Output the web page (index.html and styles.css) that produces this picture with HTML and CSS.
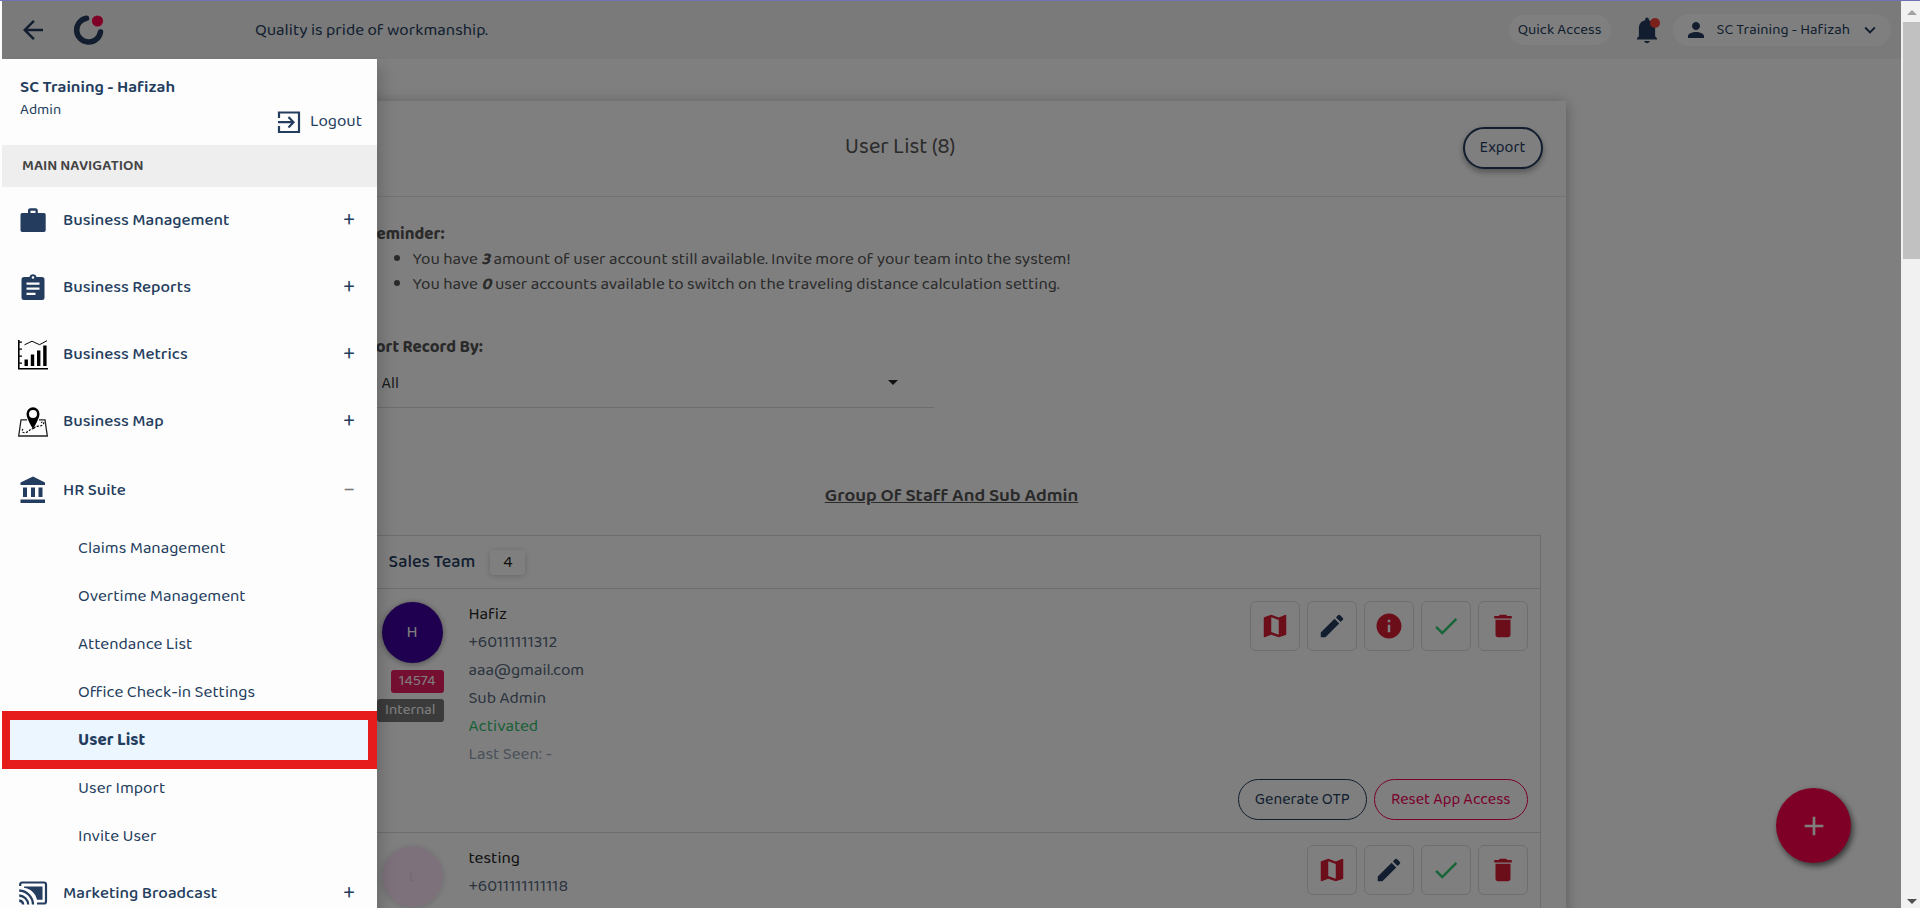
FILE: index.html
```html
<!DOCTYPE html>
<html lang="en">
<head>
<meta charset="utf-8">
<title>User List</title>
<link rel="stylesheet" href="styles.css">
</head>
<body>
<svg class="sprite" aria-hidden="true">
  <symbol id="i-map" viewBox="0 0 24 24"><path d="M20.5 3l-.16.03L15 5.1 9 3 3.36 4.9c-.21.07-.36.25-.36.48V20.500c0 .28.22.5.5.5l.16-.03L9 18.900l6 2.100 5.640-1.900c.21-.07.36-.25.36-.48V3.500c0-.28-.22-.5-.5-.5zM15 19l-6-2.110V5l6 2.110V19z"/></symbol>
  <symbol id="i-edit" viewBox="0 0 24 24"><path d="M3 17.250V21h3.750L17.810 9.940l-3.750-3.750L3 17.250zM20.710 7.040a1 1 0 0 0 0-1.410l-2.340-2.340a1 1 0 0 0-1.410 0l-1.830 1.830 3.750 3.750 1.830-1.830z"/></symbol>
  <symbol id="i-info" viewBox="0 0 24 24"><path d="M12 2C6.480 2 2 6.480 2 12s4.480 10 10 10 10-4.480 10-10S17.520 2 12 2zm1 15h-2v-6h2v6zm0-8h-2V7h2v2z"/></symbol>
  <symbol id="i-check" viewBox="0 0 24 24"><path d="M9 16.200L4.800 12l-1.400 1.400L9 19 21 7l-1.400-1.400L9 16.200z"/></symbol>
  <symbol id="i-trash" viewBox="0 0 24 24"><path d="M6 19c0 1.100.9 2 2 2h8c1.100 0 2-.9 2-2V7H6v12zM19 4h-3.500l-1-1h-5l-1 1H5v2h14V4z"/></symbol>
</svg>

<div class="app">
  <div class="view">
    <header class="topbar">
      <button class="icon-btn" aria-label="Back">
        <svg width="30" height="30" viewBox="0 0 24 24" fill="#243d5e"><path d="M20 11H7.830l5.590-5.590L12 4l-8 8 8 8 1.410-1.410L7.830 13H20v-2z"/></svg>
      </button>
      <svg class="logo" width="32" height="32" viewBox="0 0 32 32"><path d="M13.500 4.200A12 12 0 1 0 27.500 18" fill="none" stroke="#243d5e" stroke-width="5.500" stroke-linecap="round"/><circle cx="24.500" cy="7" r="5.600" fill="#ff004c"/></svg>
      <p class="quote">Quality is pride of workmanship.</p>
      <button class="pill quick">Quick Access</button>
      <button class="icon-btn bell" aria-label="Notifications">
        <svg width="30" height="30" viewBox="0 0 24 24" fill="#243d5e"><path d="M12 22.500a2.500 2.500 0 0 0 2.400-1.700H9.600A2.500 2.500 0 0 0 12 22.500zm6.500-5.500V10.500c0-3.200-1.700-5.700-5-6.400V3.500a1.500 1.500 0 0 0-3 0v.6c-3.300.7-5 3.200-5 6.400V17L4 18.500v1h16v-1z"/></svg>
        <span class="dot"></span>
      </button>
      <button class="pill account">
        <svg width="24" height="24" viewBox="0 0 24 24" fill="#243d5e"><path d="M12 12c2.210 0 4-1.790 4-4s-1.790-4-4-4-4 1.790-4 4 1.790 4 4 4zm0 2c-2.670 0-8 1.340-8 4v2h16v-2c0-2.660-5.330-4-8-4z"/></svg>
        <span>SC Training - Hafizah</span>
        <svg width="22" height="22" viewBox="0 0 24 24" fill="#243d5e"><path d="M7.410 8.590L12 13.170l4.590-4.580L18 10l-6 6-6-6z"/></svg>
      </button>
    </header>

    <main class="card">
      <div class="card-head">
        <h1>User List (8)</h1>
        <button class="export">Export</button>
      </div>
      <div class="card-body">
        <section class="reminder">
          <strong>Reminder:</strong>
          <ul>
            <li>You have <b><i>3</i></b> amount of user account still available. Invite more of your team into the system!</li>
            <li>You have <b><i>0</i></b> user accounts available to switch on the traveling distance calculation setting.</li>
          </ul>
        </section>
        <div class="sort">
          <label for="sort">Sort Record By:</label>
          <div class="select-wrap">
            <select id="sort"><option>All</option></select>
          </div>
        </div>
        <h2>Group Of Staff And Sub Admin</h2>
        <section class="group">
          <div class="group-head"><h3>Sales Team</h3><span class="count">4</span></div>
          <article class="user">
            <div class="who">
              <span class="avatar">H</span>
              <span class="tag pink">14574</span>
              <span class="tag grey">Internal</span>
            </div>
            <div class="info">
              <span class="name">Hafiz</span>
              <span>+60111111312</span>
              <span>aaa@gmail.com</span>
              <span>Sub Admin</span>
              <span class="ok">Activated</span>
              <span class="seen">Last Seen: -</span>
            </div>
            <div class="actions">
              <div class="tools">
                <button class="red" aria-label="Map"><svg><use href="#i-map"/></svg></button>
                <button class="navy" aria-label="Edit"><svg><use href="#i-edit"/></svg></button>
                <button class="red" aria-label="Info"><svg><use href="#i-info"/></svg></button>
                <button class="green" aria-label="Approve"><svg><use href="#i-check"/></svg></button>
                <button class="red" aria-label="Delete"><svg><use href="#i-trash"/></svg></button>
              </div>
              <div class="links">
                <button class="navy">Generate OTP</button>
                <button class="rose">Reset App Access</button>
              </div>
            </div>
          </article>
          <article class="user">
            <div class="who"><span class="avatar pale">t</span></div>
            <div class="info">
              <span class="name">testing</span>
              <span>+6011111111118</span>
              <span>staff@gmail.com</span>
            </div>
            <div class="actions">
              <div class="tools">
                <button class="red" aria-label="Map"><svg><use href="#i-map"/></svg></button>
                <button class="navy" aria-label="Edit"><svg><use href="#i-edit"/></svg></button>
                <button class="green" aria-label="Approve"><svg><use href="#i-check"/></svg></button>
                <button class="red" aria-label="Delete"><svg><use href="#i-trash"/></svg></button>
              </div>
            </div>
          </article>
        </section>
      </div>
    </main>

    <button class="fab" aria-label="Add user"><svg width="32" height="32" viewBox="0 0 24 24" fill="#fff"><path d="M19 13h-6v6h-2v-6H5v-2h6V5h2v6h6v2z"/></svg></button>
    <div class="shade"></div>

    <aside class="sidebar">
      <div class="profile">
        <div class="person"><strong>SC Training - Hafizah</strong><span>Admin</span></div>
        <a class="logout" href="#">
          <svg width="24" height="24" viewBox="0 0 24 24" fill="none" stroke="#243d5e" stroke-width="2.200"><path d="M2 8V2.500h20v19.500H2V16M1 12.200h15M11.500 7l5 5.200-5 5.200"/></svg>
          <span>Logout</span>
        </a>
      </div>
      <h4>MAIN NAVIGATION</h4>
      <nav>
        <a class="item" href="#">
          <svg viewBox="0 0 30 30"><path fill-rule="evenodd" d="M2.500 8.700A1.700 1.700 0 0 1 4.200 7H10V4.500a2.300 2.300 0 0 1 2.300-2.300h5.200a2.300 2.300 0 0 1 2.300 2.300V7H26a1.700 1.700 0 0 1 1.700 1.700v15.500a1.700 1.700 0 0 1-1.700 1.700H4.200a1.700 1.700 0 0 1-1.700-1.700zM12.500 4.700V7h5V4.700z"/></svg>
          <span>Business Management</span><b>+</b>
        </a>
        <a class="item" href="#">
          <svg viewBox="0 0 30 30"><path fill-rule="evenodd" d="M6 4h5.500a3.600 3.600 0 0 1 7 0H24a2.500 2.500 0 0 1 2.500 2.500v18A2.500 2.500 0 0 1 24 27H6a2.500 2.500 0 0 1-2.500-2.500v-18A2.500 2.500 0 0 1 6 4zm9-.8a1.200 1.200 0 1 0 0 2.600 1.200 1.200 0 0 0 0-2.600zM8.500 9.500v2.200h13V9.500zm0 5v2.200h13v-2.200zm0 5.200v2.200h9v-2.200z"/></svg>
          <span>Business Reports</span><b>+</b>
        </a>
        <a class="item" href="#">
          <svg viewBox="0 0 30 30"><g fill="#000"><path d="M0 0h1.600v28H30v1.500H0z"/><path d="M1 1.500h3v1.200H1zm0 7h3v1.200H1zm0 7h3v1.200H1zm0 7h3v1.200H1zM6.500 19.500h3.400V26H6.500zm6.300-5h3.400V26h-3.400zm6.200-4h3.400V26H19zM25.200 5.500h3.400V26h-3.400z"/></g><path d="M6.500 4.800L14 1.200l7.500 3.500 7.500-4" fill="none" stroke="#000" stroke-width="1"/></svg>
          <span>Business Metrics</span><b>+</b>
        </a>
        <a class="item" href="#">
          <svg viewBox="0 0 30 30"><path d="M9 12.800H3L.7 29h28.600L27 12.800h-6" fill="none" stroke="#222" stroke-width="1.300"/><path d="M16 21.500c-4 0-5 3-8 4s-5-1-3-3.500M16 21.500c2-4 6-1 8.500-3.500s1-4-1.500-2.500" fill="none" stroke="#000" stroke-width="1.100" stroke-dasharray="2.200 1.300"/><path fill="#000" fill-rule="evenodd" d="M15 .3a6.500 6.500 0 0 0-6.500 6.500C8.500 12 15 22 15 22s6.500-10 6.500-15.200A6.500 6.500 0 0 0 15 .3zm0 2.700a4 4 0 1 1 0 8 4 4 0 0 1 0-8z"/></svg>
          <span>Business Map</span><b>+</b>
        </a>
        <a class="item open" href="#">
          <svg viewBox="0 0 30 30"><path d="M15 1.500L27 7.500V10H2.500V7.500zM5 12.500h4V22H5zm8 0h4V22h-4zm7.500 0h4V22h-4zM2.500 24.500H27V28H2.500z"/></svg>
          <span>HR Suite</span><b class="minus">−</b>
        </a>
        <div class="sub">
          <a href="#">Claims Management</a>
          <a href="#">Overtime Management</a>
          <a href="#">Attendance List</a>
          <a href="#">Office Check-in Settings</a>
          <a class="active" href="#">User List</a>
          <a href="#">User Import</a>
          <a href="#">Invite User</a>
        </div>
        <a class="item last" href="#">
          <svg viewBox="0 0 30 30"><path d="M2.200 8V6.500a2 2 0 0 1 2-2H26a2 2 0 0 1 2 2v17a2 2 0 0 1-2 2H19" fill="none" stroke="#243d5e" stroke-width="2.200"/><path d="M6 8.500h18.500v13.200H19C17.500 15 12 10.500 6 9.800z"/><path d="M1.200 22.500a4.500 4.500 0 0 1 4 4M1.200 17.500a9.500 9.500 0 0 1 9 9M1.200 12.500a14.500 14.500 0 0 1 13.800 14" fill="none" stroke="#243d5e" stroke-width="2.300"/></svg>
          <span>Marketing Broadcast</span><b>+</b>
        </a>
      </nav>
    </aside>
  </div>
  <div class="scrollbar" aria-hidden="true">
    <span class="up"></span><span class="thumb"></span><span class="down"></span>
  </div>
</div>
</body>
</html>
```
FILE: styles.css
```css
* { box-sizing: border-box; margin: 0; padding: 0; }
body {
  font: 17px/25px "Baloo 2", "Noto Sans", "Open Sans", sans-serif;
  color: #555;
  background: #fdfdfd;
  overflow: hidden;
}
button, select { font: inherit; background: none; border: 0; color: #243d5e; }
a { color: inherit; text-decoration: none; }
.sprite { position: absolute; width: 0; height: 0; }

.app { display: flex; height: 100vh; border-top: 1px solid #6f72b4; }
.view { position: relative; flex: 1; margin-left: 2px; overflow: hidden; background: #fff; }

.topbar { display: flex; align-items: center; height: 58px; padding: 0 10px 0 16px; background: #f4f4f4; }
.icon-btn { display: flex; }
.logo { margin-left: 25px; }
.quote { flex: 1; padding-left: 150px; color: #243d5e; }
.pill { border-radius: 16px; background: #fff; font-size: 15px; }
.quick { height: 30px; padding: 0 9px; }
.bell { position: relative; margin: 0 11px 0 21px; }
.dot { position: absolute; top: 3px; right: 2px; width: 10px; height: 10px; border-radius: 50%; background: #f44336; }
.account { display: flex; align-items: center; gap: 9px; height: 32px; padding: 0 10px 0 11px; }

.card { max-width: 1228px; margin: 42px auto 0; background: #fff; box-shadow: 0 2px 14px rgba(0, 0, 0, .3); }
.card-head { display: flex; align-items: center; height: 96px; padding: 0 23px 2px 0; border-bottom: 1px solid #e4e4e4; }
.card-head h1 { flex: 1; text-align: center; font-size: 22px; font-weight: 400; }
.export { height: 42px; padding: 0 15px; border: 2px solid #243d5e; border-radius: 21px; font-size: 16px; background: #fff; box-shadow: 0 3px 6px rgba(0, 0, 0, .35); }
.card-body { padding: 25px 25px; }
.reminder { padding-left: 4px; }
.reminder ul { padding-left: 46px; }
.sort { width: 50%; padding: 38px 18px 0 4px; }
.sort label { font-weight: 700; }
.select-wrap { position: relative; border-bottom: 1px solid #dadada; }
.select-wrap::after { content: ""; position: absolute; right: 36px; top: 20px; border: 5px solid transparent; border-top-color: #222; border-bottom: 0; }
.select-wrap select { width: 100%; height: 47px; padding-left: 15px; appearance: none; color: #333; font-size: 16px; }
.card-body h2 { padding: 76px 0 26px; text-align: center; font-size: 19px; font-weight: 600; text-decoration: underline; }

.group { border: 1px solid #dadada; }
.group-head { display: flex; align-items: center; gap: 15px; height: 53px; padding-left: 25px; border-bottom: 1px solid #dadada; color: #243d5e; }
.group-head h3 { font-size: 18px; font-weight: 500; }
.count { width: 35px; text-align: center; border-radius: 4px; color: #222; box-shadow: 0 1px 6px rgba(0, 0, 0, .2); }
.user { display: flex; min-height: 244px; padding: 12px 12px 12px 0; border-bottom: 1px solid #dadada; }
.who { width: 80px; display: flex; flex-direction: column; align-items: flex-end; gap: 6px; }
.avatar { width: 61px; height: 61px; margin: 1px; border-radius: 50%; background: #3f00a0; color: #fff; line-height: 61px; text-align: center; box-shadow: 0 1px 6px rgba(0, 0, 0, .4); }
.avatar.pale { background: #fbe4f9; color: #ecd0ec; box-shadow: 0 1px 6px rgba(0, 0, 0, .15); }
.tag { padding: 0 8px; border-radius: 3px; color: #fff; font-size: 15px; line-height: 23px; }
.pink { background: #e91e63; }
.grey { background: #777; }
.info { flex: 1; display: flex; flex-direction: column; padding-left: 25px; color: #56677c; line-height: 28px; }
.name { color: #222; }
.ok { color: #2fbf6b; }
.seen { color: #93a2b5; }
.actions { display: flex; flex-direction: column; align-items: flex-end; justify-content: space-between; }
.tools, .links { display: flex; gap: 7px; }
.tools button { width: 50px; height: 50px; display: grid; place-items: center; border: 1px solid #dcdcdc; border-radius: 6px; }
.tools svg { width: 30px; height: 30px; fill: currentColor; }
.links button { height: 41px; padding: 0 16px; border: 1px solid; border-radius: 21px; font-size: 16px; }
.red { color: #d81b34; }
.green { color: #2fcb70; }
.navy { color: #243d5e; }
.rose { color: #f50057; }

.fab { position: absolute; right: 50px; bottom: 45px; width: 75px; height: 75px; display: grid; place-items: center; border-radius: 50%; background: #ff004c; box-shadow: 2px 3px 6px rgba(0, 0, 0, .6); }
.shade { position: absolute; inset: 0; background: rgba(0, 0, 0, .5); }

.sidebar { position: absolute; left: 0; top: 58px; bottom: 0; width: 375px; background: #fdfdfd; color: #243d5e; box-shadow: 6px 8px 12px rgba(0, 0, 0, .15); }
.profile { display: flex; justify-content: space-between; align-items: flex-end; height: 86px; padding: 0 15px 11px 18px; }
.person { display: flex; flex-direction: column; align-self: flex-start; padding-top: 17px; line-height: 23px; }
.person strong { font-weight: 600; }
.person span { font-size: 15px; }
.logout { display: flex; align-items: center; gap: 9px; }
.sidebar h4 { padding-left: 20px; font-size: 15px; font-weight: 600; line-height: 42px; background: #eee; color: #444; }
.item { display: flex; align-items: center; height: 67px; padding: 0 22px 0 16px; font-weight: 500; }
.item.open { height: 70px; }
.item.last { height: 64px; }
.item svg { width: 30px; height: 30px; margin-right: 15px; fill: #243d5e; }
.item span { flex: 1; }
.item b { font-size: 22px; font-weight: 400; }
.minus { color: #777; }
.sub a { display: block; padding-left: 76px; line-height: 48px; }
.sub .active { position: relative; font-weight: 700; background: #ebf6ff; }
.active::after { content: ""; position: absolute; inset: -6px 0 -4px -1px; border: 9px solid #e61c1c; }

.scrollbar { display: flex; flex-direction: column; width: 19px; padding: 9px 0 4px 2px; background: #f1f1f1; }
.up, .down { align-self: center; border: 5px solid transparent; }
.up { border-bottom-color: #a3a3a3; border-top: 0; }
.thumb { height: 237px; margin-top: 7px; background: #c1c1c1; }
.down { margin-top: auto; border-top-color: #505050; border-bottom: 0; }
```
